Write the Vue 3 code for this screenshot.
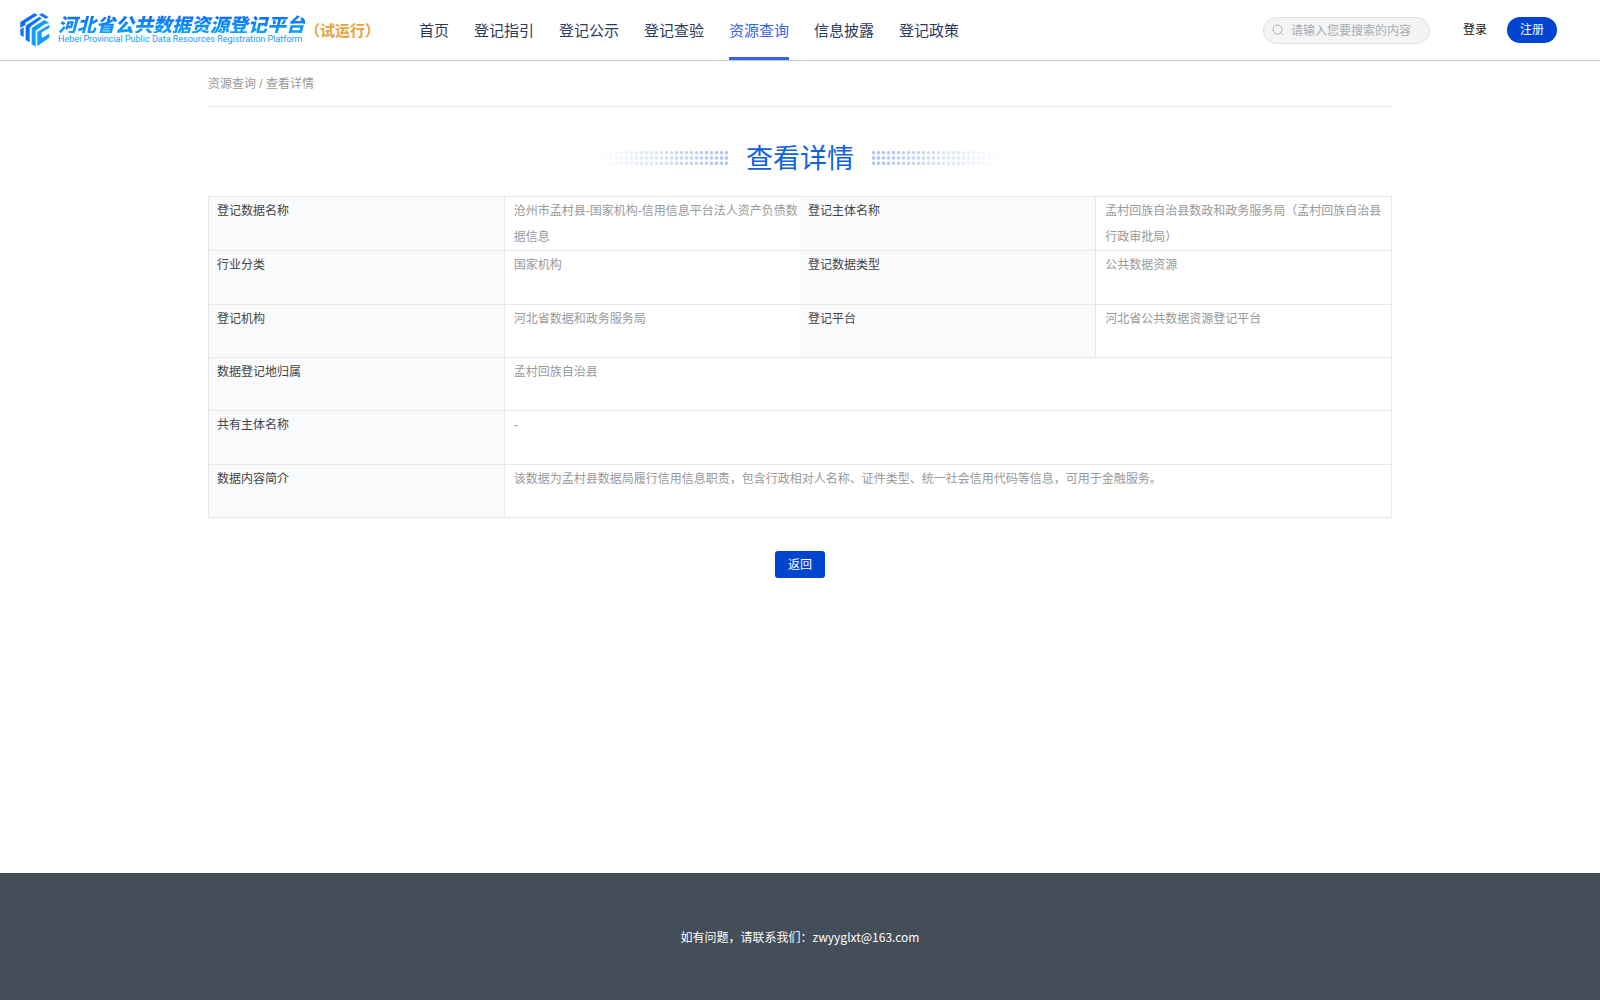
<script setup>
const nav = ['首页', '登记指引', '登记公示', '登记查验', '资源查询', '信息披露', '登记政策']
const active = '资源查询'
const rows = [
  ['登记数据名称', '沧州市孟村县-国家机构-信用信息平台法人资产负债数据信息', '登记主体名称', '孟村回族自治县数政和政务服务局（孟村回族自治县行政审批局）'],
  ['行业分类', '国家机构', '登记数据类型', '公共数据资源'],
  ['登记机构', '河北省数据和政务服务局', '登记平台', '河北省公共数据资源登记平台'],
  ['数据登记地归属', '孟村回族自治县'],
  ['共有主体名称', '-'],
  ['数据内容简介', '该数据为孟村县数据局履行信用信息职责，包含行政相对人名称、证件类型、统一社会信用代码等信息，可用于金融服务。'],
]
</script>

<template>
  <div class="page">
    <header class="header">
      <a class="brand" href="#">
        <svg class="mark" viewBox="11 8 90 102" aria-hidden="true">
          <g fill="#0a70ff">
            <path d="M12 35 54 9l10 5-37 23v7l-15 9z" />
            <path d="M12 57l10-6v29l-10-6z" />
            <path d="M28 46 68 20l9 4-32 23-5 7v42l-12-7z" />
            <path d="M68 13l9-4 20 12-9 4z" />
          </g>
          <g fill="#0f9dff">
            <path d="M46 53 84 29l15 9-13 3-28 20v48l-12-7z" />
            <path d="M63 64l36-21v10L76 66v17l23-13v12L63 107z" />
          </g>
        </svg>
        <span class="names">
          <span class="name">河北省公共数据资源登记平台</span>
          <span class="name-en">Hebei Provincial Public Data Resources Registration Platform</span>
        </span>
        <span class="trial">（试运行）</span>
      </a>
      <nav class="nav">
        <a v-for="item in nav" :key="item" href="#" :class="{ active: item === active }">{{ item }}</a>
      </nav>
      <div class="tools">
        <label class="search">
          <svg viewBox="0 0 12 12" aria-hidden="true">
            <circle cx="5.500" cy="5.500" r="4.500" /><path d="m9 9 2 2" />
          </svg>
          <input type="text" aria-label="搜索" placeholder="请输入您要搜索的内容" />
        </label>
        <button class="login" type="button">登录</button>
        <button class="register" type="button">注册</button>
      </div>
    </header>

    <main class="main">
      <div class="crumbs"><a href="#">资源查询</a> / <span>查看详情</span></div>
      <div class="heading">
        <span class="dots left"></span>
        <h1>查看详情</h1>
        <span class="dots"></span>
      </div>
      <table class="detail">
        <tbody>
          <tr v-for="row in rows" :key="row[0]">
            <template v-for="(cell, i) in row" :key="i">
              <th v-if="i % 2 === 0" scope="row">{{ cell }}</th>
              <td v-else :colspan="row.length === 2 ? 3 : 1">{{ cell }}</td>
            </template>
          </tr>
        </tbody>
      </table>
      <button class="back" type="button">返回</button>
    </main>

    <footer class="footer">如有问题，请联系我们：zwyyglxt@163.com</footer>
  </div>
</template>

<style>
body {
  margin: 0;
}
</style>

<style scoped>
.page {
  display: flex;
  flex-direction: column;
  min-height: 100vh;
  background: #fff;
  font: 12px/26px "Liberation Sans", "Noto Sans CJK SC", sans-serif;
}
a {
  color: inherit;
  text-decoration: none;
}
button,
input {
  margin: 0;
  border: 0;
  padding: 0;
  background: none;
  font: inherit;
}
.header {
  display: flex;
  align-items: center;
  height: 60px;
  padding: 0 43px 0 20px;
  border-bottom: 1px solid #ccc;
}
.brand {
  display: flex;
  align-items: center;
}
.mark {
  width: 30px;
  height: 34px;
  margin-right: 8px;
}
.names {
  display: flex;
  flex-direction: column;
  width: 247px;
  white-space: nowrap;
}
.name {
  background: linear-gradient(#0a6cff, #10a4ff);
  background-clip: text;
  color: transparent;
  font: italic 900 19px/18px "Noto Sans CJK SC", sans-serif;
}
.name-en {
  color: #1a9bff;
  font: 9px/12px Roboto, sans-serif;
}
.trial {
  color: #e6a23c;
  font: bold 15px/22px "Noto Sans CJK SC", sans-serif;
}
.nav {
  display: flex;
  gap: 25px;
  margin-left: 39px;
  color: #2b3a5c;
  font: 15px/60px "Noto Sans CJK SC", sans-serif;
}
.nav a {
  height: 60px;
  box-sizing: border-box;
}
.nav .active {
  border-bottom: 3px solid #3662ec;
  color: #3662ec;
}
.tools {
  display: flex;
  align-items: center;
  margin-left: auto;
}
.search {
  display: flex;
  align-items: center;
  gap: 7px;
  box-sizing: border-box;
  width: 167px;
  height: 27px;
  padding: 0 8px;
  border: 1px solid #dcdfe6;
  border-radius: 14px;
  background: #f4f4f4;
}
.search svg {
  flex: none;
  width: 12px;
  height: 12px;
  fill: none;
  stroke: #a8abb2;
}
.search input {
  flex: 1;
  min-width: 0;
  height: 25px;
  padding-top: 2px;
  box-sizing: border-box;
  outline: 0;
}
.search input::placeholder {
  color: #a8abb2;
}
.login {
  margin: 0 20px 0 33px;
  color: #111;
}
.register,
.back {
  width: 50px;
  background: #0045d0;
  color: #fff;
}
.register {
  height: 26px;
  border-radius: 13px;
}
.main {
  flex: 1;
  width: 74%;
  margin: 0 auto;
}
.crumbs {
  height: 45px;
  border-bottom: 1px solid #e8e8e8;
  color: #999;
  line-height: 46px;
}
.heading {
  display: flex;
  align-items: center;
  justify-content: center;
  gap: 17px;
  margin: 30px 0 19px;
}
.heading h1 {
  margin: 0;
  color: #0f62dc;
  font: 27px/40px "Noto Sans CJK SC", sans-serif;
}
.dots {
  width: 130px;
  height: 16px;
  margin-top: 2px;
  background: radial-gradient(circle, #a9c0ef 35%, transparent 60%) 0 0 / 5px calc(100% / 3);
  mask-image: linear-gradient(90deg, #000, transparent);
}
.dots.left {
  mask-image: linear-gradient(270deg, #000, transparent);
}
.detail {
  width: 100%;
  height: 322px;
  border: 1px solid #e8e8e8;
  border-collapse: collapse;
  table-layout: fixed;
}
.detail tr {
  height: 53px;
}
.detail th,
.detail td {
  padding: 1px 0 0 8px;
  border-bottom: 1px solid #e8e8e8;
  text-align: left;
  vertical-align: top;
}
.detail th {
  border-right: 1px solid #e8e8e8;
  background: #f8fafc;
  color: #444;
  font-weight: 400;
}
.detail td {
  padding-left: 9px;
  color: #999;
}
.back {
  display: block;
  height: 27px;
  margin: 33px auto;
  border-radius: 3px;
}
.footer {
  height: 127px;
  background: #434e59;
  color: #fff;
  font: 12px/128px "Noto Sans CJK SC", sans-serif;
  text-align: center;
}
</style>
